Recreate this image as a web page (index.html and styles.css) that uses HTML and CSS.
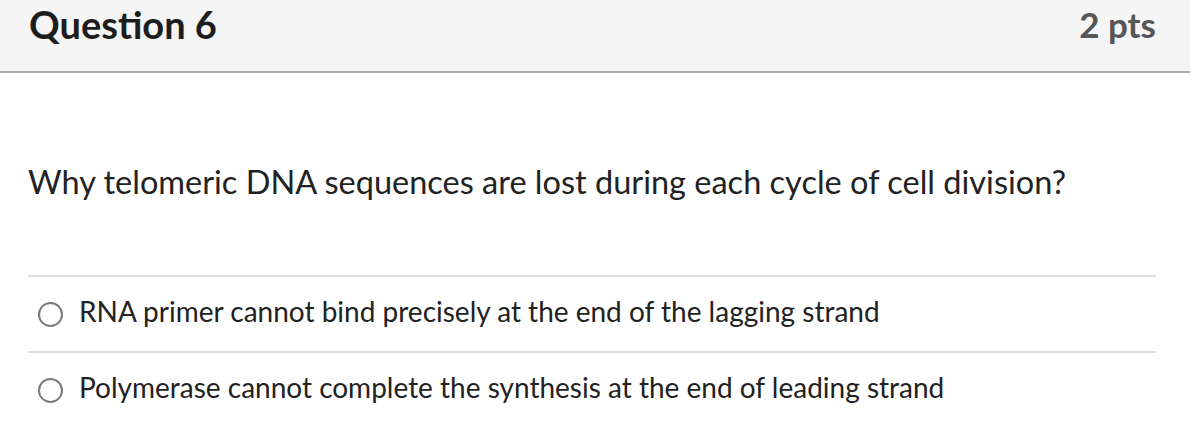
FILE: index.html
```html
<!DOCTYPE html>
<html>
<head>
<meta charset="utf-8">
<link rel="stylesheet" href="styles.css">
</head>
<body>
<div class="question">
  <div class="header">
    <h2 class="title">Question 6</h2>
    <span class="points">2 pts</span>
  </div>
  <div class="content">
    <p class="text">Why telomeric DNA sequences are lost during each cycle of cell division?</p>
    <div class="answers">
      <label class="answer"><span class="radio"></span><span class="label">RNA primer cannot bind precisely at the end of the lagging strand</span></label>
      <label class="answer"><span class="radio"></span><span class="label">Polymerase cannot complete the synthesis at the end of leading strand</span></label>
    </div>
  </div>
</div>
</body>
</html>
```
FILE: styles.css
```css
html, body {
  margin: 0;
  padding: 0;
  background: #fff;
}
body {
  font-family: Lato, "Liberation Sans", sans-serif;
  color: #2d3b45;
}
.header {
  display: flex;
  align-items: center;
  justify-content: space-between;
  height: 71px;
  background: #f5f5f5;
  border-bottom: 2px solid #aaaaaa;
  padding: 0 34px 0 29px;
  box-sizing: content-box;
}
.title {
  margin: 0 0 23px 0;
  font-size: 38px;
  font-weight: 700;
  color: #1d1d1d;
  line-height: 1;
}
.points {
  margin-bottom: 23px;
  font-size: 35px;
  font-weight: 700;
  color: #565656;
  line-height: 1;
}
.content {
  padding: 0 34px 0 28px;
}
.text {
  margin: 0;
  padding-top: 93px;
  height: 109px;
  font-size: 32.5px;
  line-height: 32px;
  color: #222;
}
.answers {
  display: flex;
  flex-direction: column;
}
.answer {
  display: flex;
  align-items: center;
  height: 74px;
  border-top: 2px solid #dedede;
  padding-left: 10px;
  gap: 16px;
}
.radio {
  width: 21px;
  height: 21px;
  border: 2px solid #7a7a7a;
  border-radius: 50%;
  flex: none;
}
.label {
  font-size: 28px;
  color: #222;
  margin-bottom: 6px;
}
```
